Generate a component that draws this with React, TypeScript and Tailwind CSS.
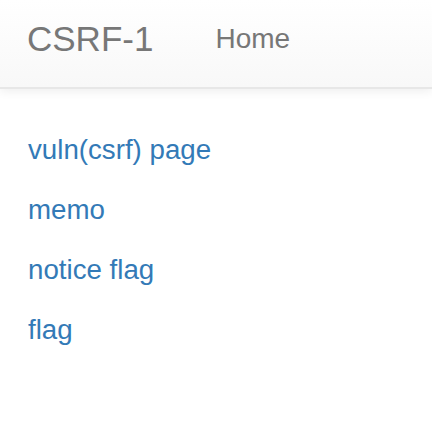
import React from "react";

export default function App() {
  const links = ["vuln(csrf) page", "memo", "notice flag", "flag"];
  return (
    <div className="min-h-[446px] bg-white" style={{ fontFamily: '"Liberation Sans", Arial, sans-serif' }}>
      <nav className="h-[89px] border-b-2 border-[#e7e7e7] bg-gradient-to-b from-white to-[#f8f8f8] shadow-[0_2px_10px_rgba(0,0,0,0.075)]">
        <div className="flex items-start pl-[27px]">
          <a className="mt-[21px] text-[35px] leading-[35px] text-[#777777]">CSRF-1</a>
          <a className="ml-[62px] mt-[25px] text-[28px] leading-[28px] text-[#777777]">Home</a>
        </div>
      </nav>
      <div className="mt-[41px] flex flex-col pl-[28px]">
        {links.map((l) => (
          <a key={l} className="mb-[20px] text-[27.7px] leading-[40px] text-[#337ab7]">
            {l}
          </a>
        ))}
      </div>
    </div>
  );
}
